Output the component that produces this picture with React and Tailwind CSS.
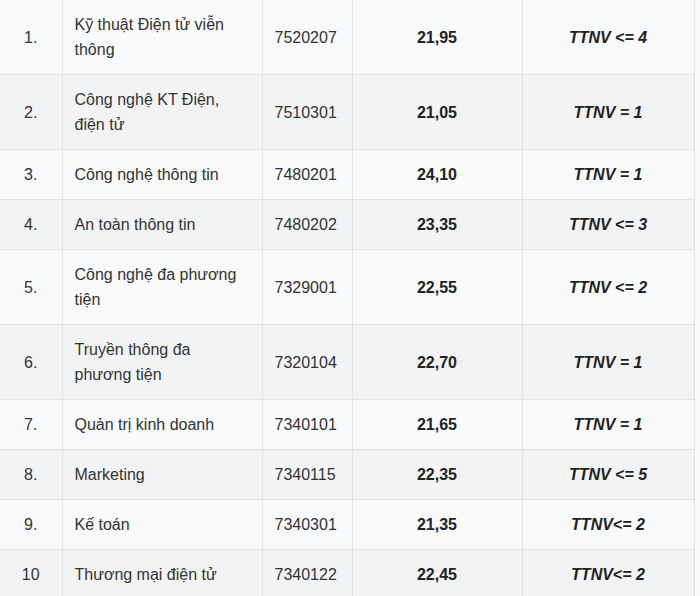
const rows = [
  { no: '1.', name: 'Kỹ thuật Điện tử viễn thông', code: '7520207', score: '21,95', note: 'TTNV <= 4' },
  { no: '2.', name: 'Công nghệ KT Điện, điện tử', code: '7510301', score: '21,05', note: 'TTNV = 1' },
  { no: '3.', name: 'Công nghệ thông tin', code: '7480201', score: '24,10', note: 'TTNV = 1' },
  { no: '4.', name: 'An toàn thông tin', code: '7480202', score: '23,35', note: 'TTNV <= 3' },
  { no: '5.', name: 'Công nghệ đa phương tiện', code: '7329001', score: '22,55', note: 'TTNV <= 2' },
  { no: '6.', name: 'Truyền thông đa phương tiện', code: '7320104', score: '22,70', note: 'TTNV = 1' },
  { no: '7.', name: 'Quản trị kinh doanh', code: '7340101', score: '21,65', note: 'TTNV = 1' },
  { no: '8.', name: 'Marketing', code: '7340115', score: '22,35', note: 'TTNV <= 5' },
  { no: '9.', name: 'Kế toán', code: '7340301', score: '21,35', note: 'TTNV<= 2' },
  { no: '10', name: 'Thương mại điện tử', code: '7340122', score: '22,45', note: 'TTNV<= 2' },
];

export default function App() {
  return (
    <div className="w-[700px] h-[596px] overflow-hidden bg-[#f8f9fa] font-['Liberation_Sans',Arial,sans-serif] text-[16px] leading-[25px] text-[#333]">
      <table className="w-[694px] table-fixed border-collapse">
        <colgroup>
          <col className="w-[62px]" />
          <col className="w-[200px]" />
          <col className="w-[90px]" />
          <col className="w-[170px]" />
          <col className="w-[172px]" />
        </colgroup>
        <tbody>
          {rows.map((r, i) => (
            <tr key={r.no} className={i % 2 === 1 ? 'bg-[#f2f3f4]' : 'bg-[#f8f9fa]'}>
              <td className="border border-t-0 border-l-0 border-[#e2e4e6] px-3 py-3 text-center">{r.no}</td>
              <td className="border border-t-0 border-[#e2e4e6] px-3 py-3">{r.name}</td>
              <td className="border border-t-0 border-[#e2e4e6] px-3 py-3">{r.code}</td>
              <td className="border border-t-0 border-[#e2e4e6] px-3 py-3 text-center font-bold text-[#222]">{r.score}</td>
              <td className="border border-t-0 border-[#e2e4e6] px-3 py-3 text-center font-bold italic text-[#222]">{r.note}</td>
            </tr>
          ))}
        </tbody>
      </table>
    </div>
  );
}
